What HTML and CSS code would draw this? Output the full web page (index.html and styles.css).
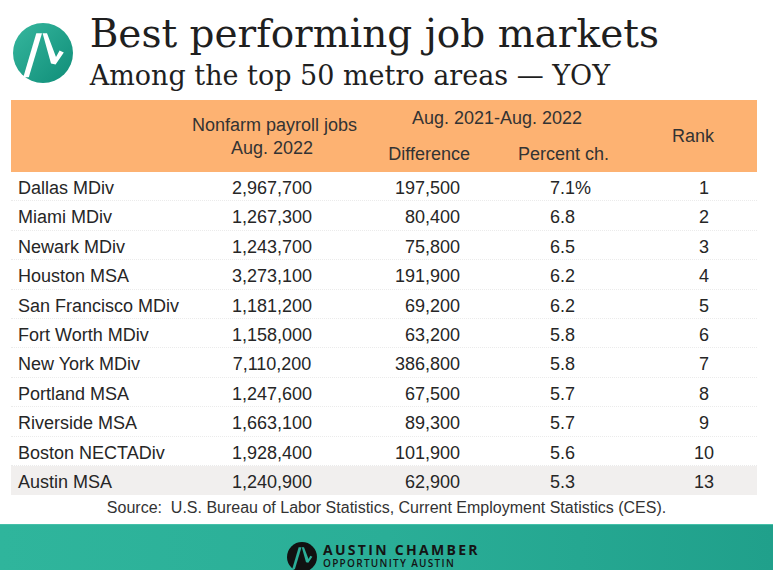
FILE: index.html
```html
<!DOCTYPE html>
<html lang="en">
<head>
<meta charset="utf-8">
<title>Best performing job markets</title>
<link rel="stylesheet" href="styles.css">
</head>
<body>
<header class="head">
  <svg class="logo" viewBox="0 0 60 60" width="60" height="60" aria-hidden="true">
    <defs>
      <linearGradient id="lg" x1="0" y1="0" x2="1" y2="1">
        <stop offset="0" stop-color="#36b79e"/>
        <stop offset="1" stop-color="#0f8d78"/>
      </linearGradient>
    </defs>
    <circle cx="30" cy="30" r="30" fill="url(#lg)"/>
    <polygon points="10.3,54.3 15.8,54.3 29,10.3 23.3,10.3" fill="#fff"/>
    <polygon points="29.6,10.3 34,10.3 43,34 46.6,27.6 50.8,29.6 42.6,41.5 38,40.6" fill="#fff"/>
  </svg>
  <div class="titles">
    <h1 class="title">Best performing job markets</h1>
    <p class="subtitle">Among the top 50 metro areas — YOY</p>
  </div>
</header>

<section class="table">
  <div class="thead">
    <div class="h-jobs">Nonfarm payroll jobs<br>Aug. 2022</div>
    <div class="h-group">Aug. 2021-Aug. 2022</div>
    <div class="h-diff">Difference</div>
    <div class="h-pct">Percent ch.</div>
    <div class="h-rank">Rank</div>
  </div>
  <div class="row"><span class="c-name">Dallas MDiv</span><span class="c-jobs">2,967,700</span><span class="c-diff">197,500</span><span class="c-pct">7.1%</span><span class="c-rank">1</span></div>
  <div class="row"><span class="c-name">Miami MDiv</span><span class="c-jobs">1,267,300</span><span class="c-diff">80,400</span><span class="c-pct">6.8</span><span class="c-rank">2</span></div>
  <div class="row"><span class="c-name">Newark MDiv</span><span class="c-jobs">1,243,700</span><span class="c-diff">75,800</span><span class="c-pct">6.5</span><span class="c-rank">3</span></div>
  <div class="row"><span class="c-name">Houston MSA</span><span class="c-jobs">3,273,100</span><span class="c-diff">191,900</span><span class="c-pct">6.2</span><span class="c-rank">4</span></div>
  <div class="row"><span class="c-name">San Francisco MDiv</span><span class="c-jobs">1,181,200</span><span class="c-diff">69,200</span><span class="c-pct">6.2</span><span class="c-rank">5</span></div>
  <div class="row"><span class="c-name">Fort Worth MDiv</span><span class="c-jobs">1,158,000</span><span class="c-diff">63,200</span><span class="c-pct">5.8</span><span class="c-rank">6</span></div>
  <div class="row"><span class="c-name">New York MDiv</span><span class="c-jobs">7,110,200</span><span class="c-diff">386,800</span><span class="c-pct">5.8</span><span class="c-rank">7</span></div>
  <div class="row"><span class="c-name">Portland MSA</span><span class="c-jobs">1,247,600</span><span class="c-diff">67,500</span><span class="c-pct">5.7</span><span class="c-rank">8</span></div>
  <div class="row"><span class="c-name">Riverside MSA</span><span class="c-jobs">1,663,100</span><span class="c-diff">89,300</span><span class="c-pct">5.7</span><span class="c-rank">9</span></div>
  <div class="row"><span class="c-name">Boston NECTADiv</span><span class="c-jobs">1,928,400</span><span class="c-diff">101,900</span><span class="c-pct">5.6</span><span class="c-rank">10</span></div>
  <div class="row hl"><span class="c-name">Austin MSA</span><span class="c-jobs">1,240,900</span><span class="c-diff">62,900</span><span class="c-pct">5.3</span><span class="c-rank">13</span></div>
</section>

<p class="source">Source:&nbsp; U.S. Bureau of Labor Statistics, Current Employment Statistics (CES).</p>

<footer class="foot">
  <svg class="foot-logo" viewBox="0 0 60 60" width="30" height="30" aria-hidden="true">
    <circle cx="30" cy="30" r="30" fill="#111"/>
    <polygon points="10.3,54.3 15.8,54.3 29,10.3 23.3,10.3" fill="#2bad97"/>
    <polygon points="29.6,10.3 34,10.3 43,34 46.6,27.6 50.8,29.6 42.6,41.5 38,40.6" fill="#2bad97"/>
  </svg>
  <div class="brand">
    <div class="brand-main">AUSTIN CHAMBER</div>
    <div class="brand-sub">OPPORTUNITY AUSTIN</div>
  </div>
</footer>
</body>
</html>
```

FILE: styles.css
```css
html, body {
  margin: 0;
  padding: 0;
}

body {
  width: 773px;
  height: 570px;
  overflow: hidden;
  background: #ffffff;
  font-family: "Liberation Sans", Arial, sans-serif;
  color: #2a2a2a;
}

/* ---------- header ---------- */
.head {
  display: flex;
  align-items: flex-start;
  height: 100px;
}

.logo {
  display: block;
  flex: none;
  margin-top: 22.7px;
  margin-left: 12.7px;
}

.titles {
  margin-left: 17px;
  padding-top: 11.5px;
}

.title {
  margin: 0;
  font-family: "DejaVu Serif", "Liberation Serif", serif;
  font-weight: 400;
  font-size: 39px;
  line-height: 44px;
  color: #1f1f1f;
  white-space: nowrap;
}

.subtitle {
  margin: 4px 0 0;
  font-family: "DejaVu Serif", "Liberation Serif", serif;
  font-size: 27px;
  line-height: 32px;
  color: #1f1f1f;
  white-space: nowrap;
}

/* ---------- table ---------- */
.table {
  margin-left: 11px;
  width: 746px;
}

.thead,
.row {
  display: grid;
  grid-template-columns: 181px 160px 154px 114px 137px;
}

.thead {
  grid-template-rows: 36px 36px;
  background: #fdb272;
  font-size: 18px;
  line-height: 23px;
  color: #333333;
  white-space: nowrap;
}

.h-jobs {
  grid-column: 2;
  grid-row: 1 / 3;
  text-align: center;
  padding-top: 14px;
}

.h-group {
  grid-column: 3 / 5;
  grid-row: 1;
  text-align: center;
  padding-top: 7px;
  padding-left: 22px;
}

.h-diff {
  grid-column: 3;
  grid-row: 2;
  text-align: right;
  padding-top: 7px;
  padding-right: 36px;
}

.h-pct {
  grid-column: 4;
  grid-row: 2;
  padding-top: 7px;
  padding-left: 12px;
}

.h-rank {
  grid-column: 5;
  grid-row: 1 / 3;
  text-align: center;
  padding-top: 25px;
  padding-left: 9px;
}

.row {
  box-sizing: border-box;
  height: 29.4px;
  padding-top: 3px;
  font-size: 18px;
  line-height: 26.4px;
  color: #262626;
  white-space: nowrap;
  border-bottom: 1px dotted #ebebeb;
}

.row.hl {
  background: #f1efee;
  border-bottom-color: transparent;
}

.c-name {
  padding-left: 7px;
}

.c-jobs {
  text-align: center;
}

.c-diff {
  text-align: right;
  padding-right: 46px;
}

.c-pct {
  padding-left: 44px;
}

.c-rank {
  text-align: center;
  padding-left: 31px;
}

/* ---------- source ---------- */
.source {
  box-sizing: border-box;
  margin: 0;
  height: 28.6px;
  padding-top: 3px;
  font-size: 16px;
  line-height: 20px;
  color: #333333;
  text-align: center;
  white-space: nowrap;
}

/* ---------- footer ---------- */
.foot {
  display: flex;
  align-items: flex-start;
  height: 46px;
  overflow: hidden;
  padding-left: 287px;
  background: linear-gradient(90deg, #2fb59c 0%, #2aae97 50%, #20a08b 100%);
  border-top: 1px solid #45c0a9;
  box-sizing: border-box;
}

.foot-logo {
  display: block;
  flex: none;
  margin-top: 17px;
}

.brand {
  margin-left: 6px;
  padding-top: 17px;
  font-family: "Open Sans", "Noto Sans", sans-serif;
  color: #141414;
  white-space: nowrap;
}

.brand-main {
  font-weight: 700;
  font-size: 14px;
  line-height: 16px;
  letter-spacing: 2.3px;
}

.brand-sub {
  font-weight: 600;
  font-size: 10px;
  line-height: 11px;
  letter-spacing: 1.3px;
}
```
